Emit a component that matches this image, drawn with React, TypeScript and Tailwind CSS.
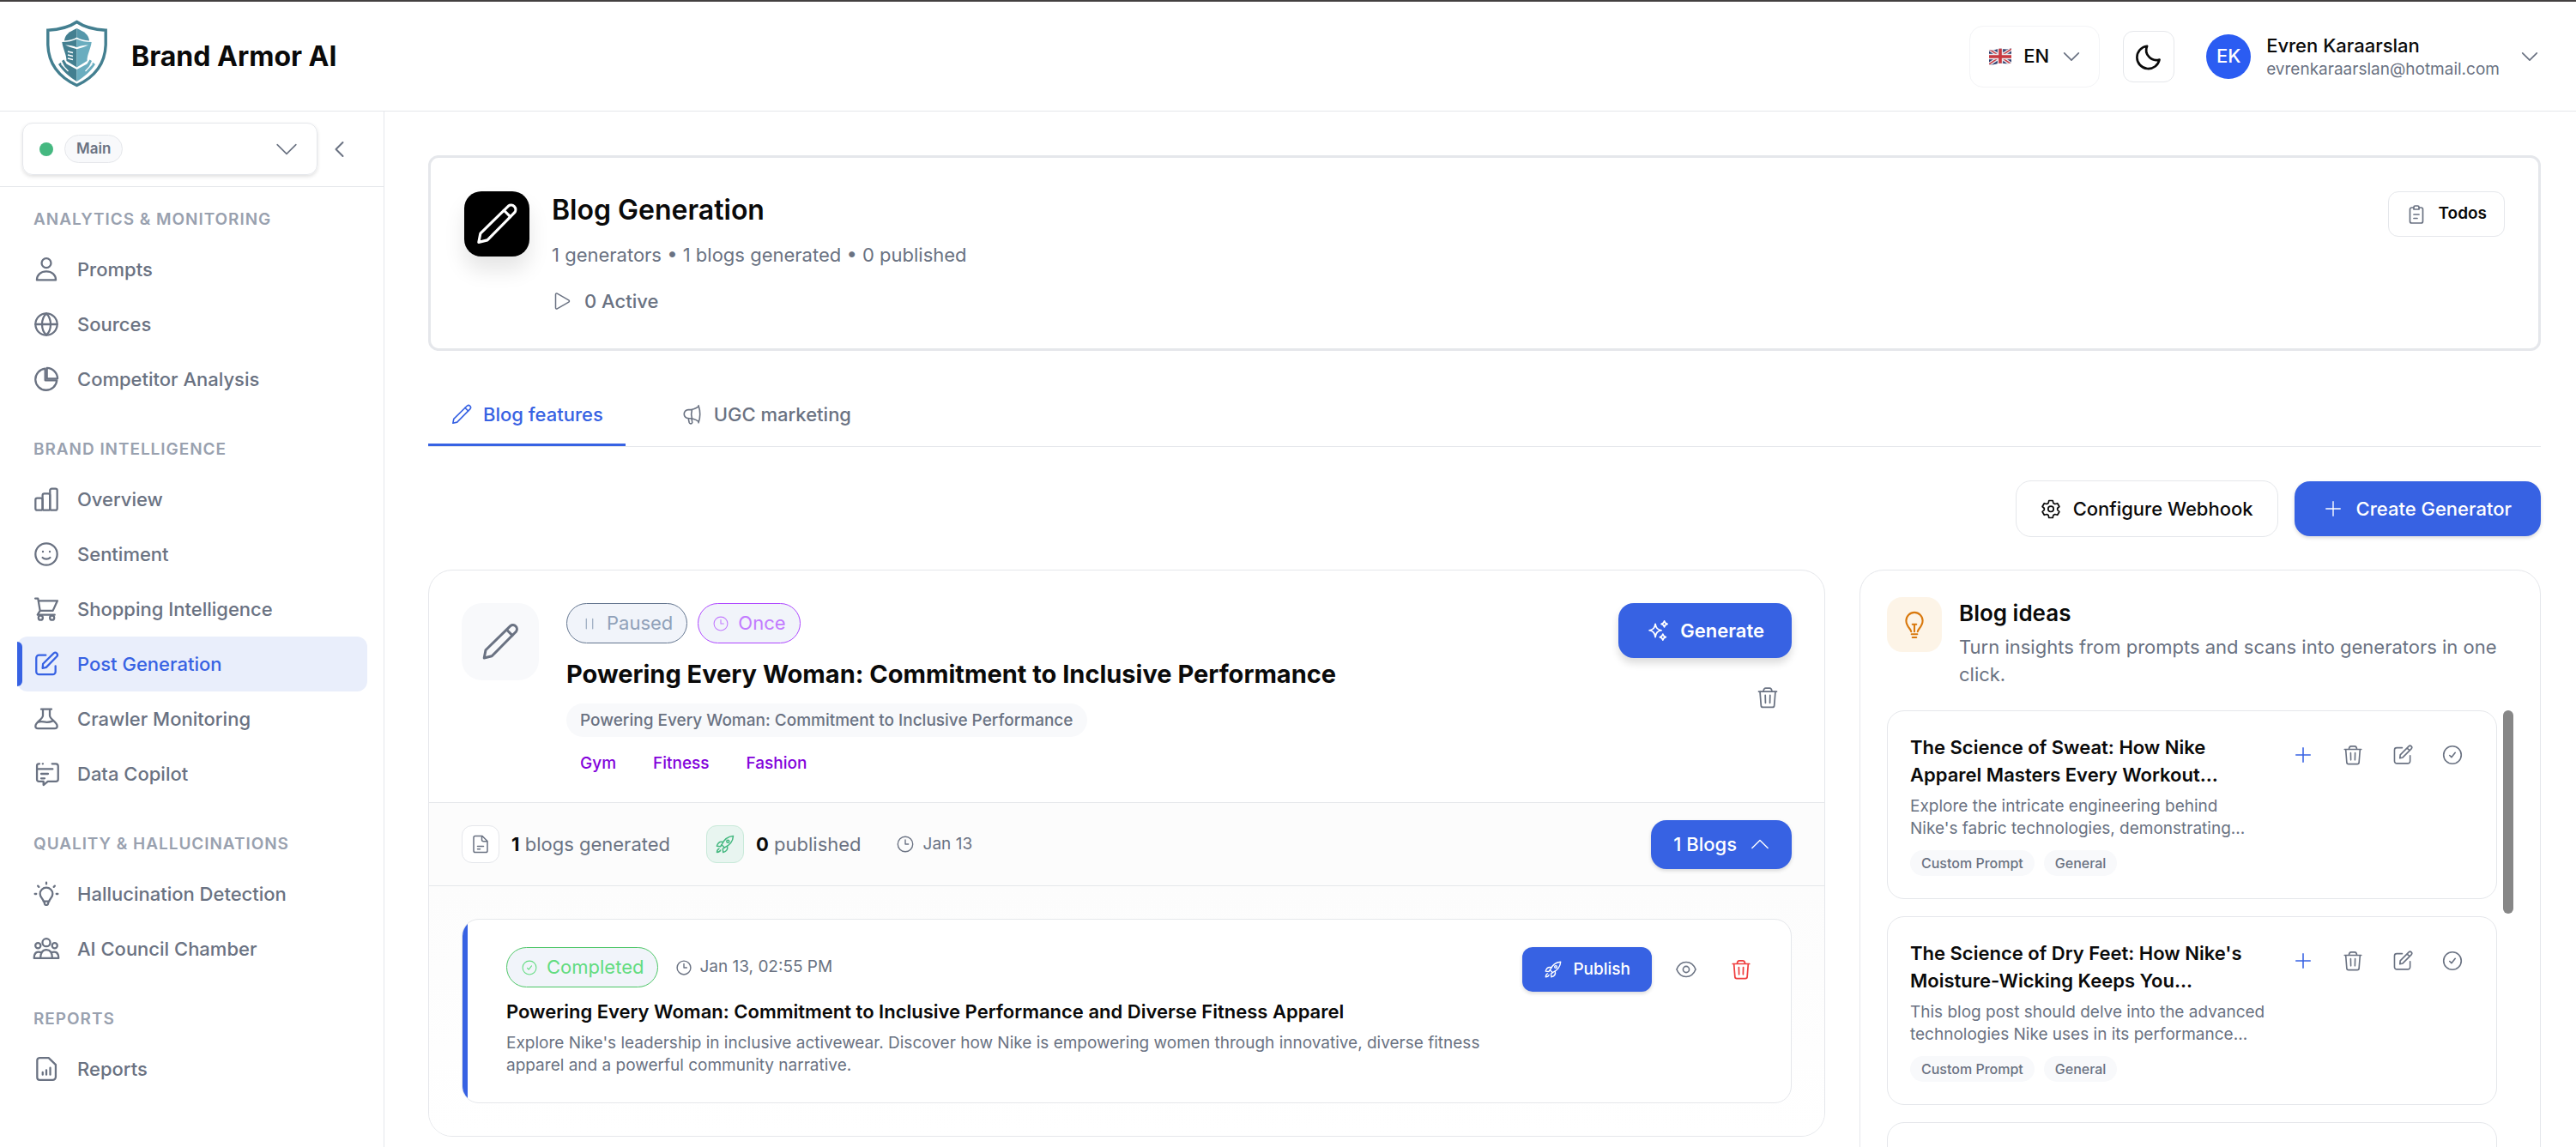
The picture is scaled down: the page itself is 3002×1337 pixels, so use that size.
import type { ReactNode } from 'react';

type IconProps = { className?: string; stroke?: number; children?: ReactNode };

function Icon({ className = 'size-7', stroke = 1.5, children }: IconProps) {
  return (
    <svg
      viewBox="0 0 24 24"
      fill="none"
      stroke="currentColor"
      strokeWidth={stroke}
      strokeLinecap="round"
      strokeLinejoin="round"
      aria-hidden="true"
      className={`shrink-0 ${className}`}
    >
      {children}
    </svg>
  );
}

const PencilIcon = (p: IconProps) => (
  <Icon {...p}>
    <path d="M2.6 21.5l.9-4.6L17.9 2.8a2.35 2.35 0 0 1 3.3 3.3L7.1 20.4z" />
    <path d="M15.7 5l3.3 3.3" />
  </Icon>
);

const TrashIcon = (p: IconProps) => (
  <Icon {...p}>
    <path d="M3 6h18M4.300 6l1.100 14a1.900 1.900 0 0 0 1.900 1.800h9.400a1.900 1.900 0 0 0 1.900-1.800L19.700 6M7.700 6c.2-2 .9-3.400 2.400-3.400h3.800c1.500 0 2.200 1.400 2.400 3.400M9.600 9.800l.2 7.600M14.400 9.800l-.2 7.600" />
  </Icon>
);

const RocketIcon = (p: IconProps) => (
  <Icon {...p}>
    <path d="M21.500 2.500C15.300 2.900 11.200 5.600 8 12.700l3.300 3.300c7-3.200 9.800-7.300 10.200-13.500z" />
    <circle cx="15.300" cy="8.700" r="1.500" />
    <path d="M9.700 9.500C6.200 8.600 3.400 10.600 2.400 14.300l4.200.4 1.400-2M14.500 14.300c.9 3.500-1.100 6.300-4.800 7.300l-.4-4.200 2-1.400" />
    <path d="M5 17.300c-1.400.5-2.300 2-2.500 4.200 2.200-.2 3.700-1.100 4.200-2.500" />
  </Icon>
);

const EditIcon = (p: IconProps) => (
  <Icon {...p}>
    <path d="M11.500 4.300H5.600a2.400 2.400 0 0 0-2.400 2.400v12a2.400 2.400 0 0 0 2.400 2.400h12a2.400 2.400 0 0 0 2.400-2.400v-6" />
    <path d="M9 15.500l.4-3.600 9.200-9.200a1.900 1.900 0 0 1 2.700 2.700l-9.200 9.300zM16.800 4.600l2.600 2.600" />
  </Icon>
);

const ClockIcon = (p: IconProps) => (
  <Icon {...p}>
    <circle cx="12" cy="12" r="9.500" />
    <path d="M12 6.500V12h4" />
  </Icon>
);

const CheckCircleIcon = (p: IconProps) => (
  <Icon {...p}>
    <circle cx="12" cy="12" r="9.500" />
    <path d="M9 12.500l2 2 4-5" />
  </Icon>
);

const ChevronDown = (p: IconProps) => (
  <Icon {...p}>
    <path d="M2 7l10 10L22 7" />
  </Icon>
);

const PlusIcon = (p: IconProps) => (
  <Icon {...p}>
    <path d="M12 3v18M3 12h18" />
  </Icon>
);

const BulbIcon = (p: IconProps) => (
  <Icon {...p}>
    <path d="M9.500 17.500c0-2-3.900-3.900-3.900-8.500a6.400 6.400 0 0 1 12.800 0c0 4.600-3.900 6.500-3.900 8.500M9.800 19.500h4.400M10.500 22h3M12 17.500v-5.500M10.500 11.800h3" />
  </Icon>
);

const navIcons: Record<string, ReactNode> = {
  Prompts: (
    <>
      <circle cx="12" cy="6.500" r="4.100" />
      <path d="M3.700 21.300c0-4.500 3.500-7.500 8.300-7.500s8.300 3 8.300 7.500z" />
    </>
  ),
  Sources: (
    <>
      <circle cx="12" cy="12" r="9.500" />
      <path d="M2.500 12h19M12 2.500c-5 4.800-5 14.200 0 19M12 2.500c5 4.800 5 14.200 0 19" />
    </>
  ),
  'Competitor Analysis': (
    <>
      <path d="M11 2.800a9.400 9.400 0 1 0 10.200 10.200H11z" />
      <path d="M12.500 2.200a9.600 9.600 0 0 1 9.300 9.300h-9.300z" />
    </>
  ),
  Overview: (
    <>
      <rect x="2.500" y="11" width="6.200" height="10.500" rx="1.500" />
      <rect x="8.700" y="7" width="6.500" height="14.500" rx="1.500" />
      <rect x="15.200" y="2.700" width="6.300" height="18.800" rx="1.500" />
    </>
  ),
  Sentiment: (
    <>
      <circle cx="12" cy="12" r="9.500" />
      <path d="M8.700 15c1.600 1.600 5 1.600 6.600 0M9 9.700v.2M15 9.700v.2" />
    </>
  ),
  'Shopping Intelligence': (
    <>
      <path d="M2.300 2.700h2.400l1.800 10.700h11.200L21.700 4.700H5M6.500 13.400L4.300 17h15" />
      <circle cx="7" cy="19.600" r="1.900" />
      <circle cx="17" cy="19.600" r="1.900" />
    </>
  ),
  'Post Generation': (
    <>
      <path d="M11.500 4.300H5.600a2.400 2.400 0 0 0-2.400 2.400v12a2.400 2.400 0 0 0 2.400 2.400h12a2.400 2.400 0 0 0 2.400-2.400v-5" />
      <path d="M8.700 15.600l.4-3.800 9.400-9.300a2 2 0 0 1 2.800 2.800l-9.400 9.600z" />
    </>
  ),
  'Crawler Monitoring': (
    <>
      <path d="M7.500 3.500h9M9 3.500v5.700c0 3-6.500 5.700-6.500 9.100 0 1.200.9 2 2.200 2h14.600c1.300 0 2.200-.8 2.200-2 0-3.400-6.500-6.100-6.500-9.100V3.500" />
      <path d="M4.700 14.800c4.500-1.500 6.500 1.500 12.500-.8" />
    </>
  ),
  'Data Copilot': (
    <>
      <path d="M6 3.200h-.6a1.600 1.600 0 0 0-1.600 1.600V17a1.600 1.600 0 0 0 1.600 1.600h4.100v3.200l3.800-3.200h7a2 2 0 0 0 2-2V5.200a2 2 0 0 0-2-2H17M9 3.200h-.2" />
      <path d="M5 7.800h12.500M7.500 12h6M7.500 16h3" />
    </>
  ),
  'Hallucination Detection': (
    <>
      <path d="M9.500 18.500c0-2-3-3-3-6.500a5.500 5.500 0 0 1 11 0c0 3.500-3 4.500-3 6.500zM10 18.700l.6 2.300a.9.900 0 0 0 .9.700h1a.9.900 0 0 0 .9-.7l.6-2.300" />
      <path d="M12 2v1.300M4.600 5l.9.900M19.400 5l-.9.900M2 12h1.200M20.800 12H22" />
    </>
  ),
  'AI Council Chamber': (
    <>
      <circle cx="12" cy="6.500" r="3.400" />
      <circle cx="4.700" cy="9.200" r="2.300" />
      <circle cx="19.300" cy="9.200" r="2.300" />
      <path d="M6.800 20.200c0-4.600 1.900-7.300 5.200-7.300s5.200 2.700 5.200 7.300M7.800 15.200c-4.300-1.600-6.500.4-6.500 5h21.400c0-4.600-2.200-6.600-6.500-5" />
    </>
  ),
  Reports: (
    <>
      <path d="M6 2.300h8l6.200 6V19a2.700 2.700 0 0 1-2.700 2.700H6.200A2.200 2.200 0 0 1 4 19.500V4.500a2.200 2.200 0 0 1 2-2.200z" />
      <path d="M8.800 15v2M12 13v4M15.400 11v6" />
    </>
  ),
};

const navGroups = [
  { title: 'Analytics & Monitoring', items: ['Prompts', 'Sources', 'Competitor Analysis'] },
  {
    title: 'Brand Intelligence',
    items: ['Overview', 'Sentiment', 'Shopping Intelligence', 'Post Generation', 'Crawler Monitoring', 'Data Copilot'],
  },
  { title: 'Quality & Hallucinations', items: ['Hallucination Detection', 'AI Council Chamber'] },
  { title: 'Reports', items: ['Reports'] },
];

const ideas = [
  {
    title: 'The Science of Sweat: How Nike Apparel Masters Every Workout...',
    text: "Explore the intricate engineering behind\nNike's fabric technologies, demonstrating...",
  },
  {
    title: "The Science of Dry Feet: How Nike's Moisture-Wicking Keeps You...",
    text: 'This blog post should delve into the advanced\ntechnologies Nike uses in its performance...',
  },
];

function Logo() {
  return (
    <svg viewBox="0 0 73 79" className="mb-[7px] h-[79px] w-[73px] shrink-0" aria-hidden="true">
      <path
        d="M36.500 2.500C28 8.500 16 11.500 2.800 12.200v17C3.500 50 15 66.500 36.500 76.500 58 66.500 69.500 50 70.200 29.200v-17C57 11.500 45 8.500 36.500 2.500z"
        fill="#fff"
        stroke="#437f90"
        strokeWidth="3.400"
      />
      <path d="M36.500 10C28 14 22.500 17 22 24.500c6-.3 10-1.500 14.500-4z" fill="#437f90" />
      <path d="M36.500 10c8.500 4 14 7 14.500 14.500-6-.3-10-1.500-14.500-4z" fill="#5597aa" />
      <path d="M19.300 26c7 0 12-1 17.200-3.500v33L24.500 48c0-8-4-13-5.200-22z" fill="#437f90" />
      <path d="M53.700 26c-7 0-12-1-17.200-3.500v33L48.500 48c0-8 4-13 5.200-22z" fill="#6aadbf" />
      <path d="M23 29.500c5 .2 9.500 1 13.500 2.700 4-1.700 8.500-2.500 13.500-2.700-4.500 2.200-9 3.500-13.500 4.700-4.500-1.200-9-2.500-13.500-4.700z" fill="#fff" />
      <path d="M26 37l6 1.600M26 41l6 1.600M26 45l6 1.600" stroke="#fff" strokeWidth="1.600" />
      <path d="M21.500 46.500l3 5 12 6.500v14C28.500 67 21 61 15 52l2.500-2 5 5-3.500-7z" fill="#437f90" />
      <path d="M51.500 46.500l-3 5-12 6.500v14C44.500 67 52 61 58 52l-2.500-2-5 5 3.500-7z" fill="#6aadbf" />
      <path d="M18.500 51.500l8 8.500M54.500 51.500l-8 8.500" stroke="#fff" strokeWidth="1.200" />
    </svg>
  );
}

function Flag() {
  return (
    <svg viewBox="0 0 26 20" className="h-5 w-[26px] shrink-0" aria-hidden="true">
      <clipPath id="flag">
        <path d="M0 2c5 2.500 9-2 14-1.200C19 1.500 22 2 26 0v17c-4 2-8 1-12 .8-5-.8-9 3.200-14 1.200z" />
      </clipPath>
      <g clipPath="url(#flag)">
        <path d="M0 0h26v20H0z" fill="#30406f" />
        <path d="M0 1l26 18M26 1L0 19" stroke="#e9e9ee" strokeWidth="4.200" />
        <path d="M0 1l26 18M26 1L0 19" stroke="#c8383f" strokeWidth="1.500" />
        <path d="M13 0v20M0 10h26" stroke="#e9e9ee" strokeWidth="6.400" />
        <path d="M13 0v20M0 10h26" stroke="#c8383f" strokeWidth="3.600" />
      </g>
    </svg>
  );
}

function Header() {
  return (
    <header className="flex h-[130px] shrink-0 items-center justify-between border-t-2 border-b border-t-[#434041] border-b-gray-200 pr-11 pl-[53px]">
      <a href="#home" className="flex items-center gap-[27px]">
        <Logo />
        <span className="text-[32px] leading-10 font-bold">Brand Armor AI</span>
      </a>
      <div className="flex items-center">
        <button className="flex h-[72px] items-center rounded-2xl border border-gray-100 px-[22px]">
          <Flag />
          <span className="ml-3.5 text-[22px] font-medium">EN</span>
          <ChevronDown className="ml-4 size-5 text-gray-500" stroke={2} />
        </button>
        <button aria-label="Dark mode" className="ml-[27px] flex size-[60px] items-center justify-center rounded-xl border border-gray-200">
          <Icon className="size-8" stroke={2}>
            <path d="M10.600 2.800A9.900 9.900 0 1 0 21.400 14.600 8.800 8.800 0 0 1 10.600 2.800z" />
          </Icon>
        </button>
        <button className="ml-[37px] flex items-center text-left">
          <span className="flex size-[52px] items-center justify-center rounded-full bg-[#2b5cf2] text-[22px] font-medium text-white">EK</span>
          <span className="ml-[18px] flex flex-col">
            <span className="text-[22px] leading-[30px] font-medium">Evren Karaarslan</span>
            <span className="text-[19px] leading-[26px] text-gray-500">evrenkaraarslan@hotmail.com</span>
          </span>
          <ChevronDown className="ml-[25px] size-5 text-gray-500" stroke={2} />
        </button>
      </div>
    </header>
  );
}

function Sidebar() {
  return (
    <aside className="flex w-[448px] shrink-0 flex-col border-r border-gray-200">
      <div className="flex h-[88px] shrink-0 items-center border-b border-gray-200 pl-[26px]">
        <button className="flex h-[61px] w-[344px] items-center rounded-xl border border-gray-200 pr-[22px] pl-[19px] shadow-[0_2px_4px_rgba(0,0,0,0.12)]">
          <span className="size-4 rounded-full bg-[#45b880]" />
          <span className="ml-[13px] rounded-full border border-gray-200 bg-[#f8f9fb] px-[13px] text-[17px] leading-[31px] font-semibold text-gray-500">Main</span>
          <ChevronDown className="ml-auto size-[26px] text-gray-500" stroke={1.5} />
        </button>
        <button aria-label="Collapse sidebar" className="ml-[13px] flex size-6 items-center justify-center text-gray-500">
          <Icon className="size-6" stroke={2}>
            <path d="M16.500 4L8.500 12l8 8" />
          </Icon>
        </button>
      </div>
      <nav className="flex flex-col gap-8 overflow-hidden pt-5 pr-[19px] pl-5">
        {navGroups.map((group) => (
          <section key={group.title}>
            <h2 className="mb-2 pl-[19px] text-[19px] leading-9 font-semibold tracking-wider text-gray-400 uppercase">{group.title}</h2>
            <ul>
              {group.items.map((item) => {
                const active = item === 'Post Generation';
                return (
                  <li
                    key={item}
                    className={`flex h-16 items-center rounded-xl ${active ? 'bg-[#e9eefb] text-[#3762e3]' : 'text-gray-500'}`}
                  >
                    <span className={`h-[52px] w-[6px] rounded-r-md ${active ? 'bg-[#3762e3]' : ''}`} />
                    <a href="#nav" className="flex flex-1 items-center gap-5 pl-3 text-[22px] font-medium">
                      <Icon className="size-8" stroke={1.7}>
                        {navIcons[item]}
                      </Icon>
                      {item}
                    </a>
                  </li>
                );
              })}
            </ul>
          </section>
        ))}
      </nav>
    </aside>
  );
}

function PageHeader() {
  return (
    <section className="flex items-start justify-between rounded-xl border-[3px] border-gray-200 p-[39px]">
      <div className="flex items-start gap-[26px]">
        <div className="flex size-[76px] items-center justify-center rounded-[20px] bg-black text-white shadow-[0_16px_24px_rgba(0,0,0,0.1)]">
          <PencilIcon className="size-[54px]" stroke={1.4} />
        </div>
        <div>
          <h1 className="text-[32px] leading-11 font-semibold">Blog Generation</h1>
          <p className="mt-3 text-[22px] leading-9 text-gray-500">1 generators • 1 blogs generated • 0 published</p>
          <p className="mt-5 flex items-center gap-3.5 text-[22px] leading-8 font-medium text-gray-500">
            <Icon className="size-6" stroke={1.5}>
              <path d="M4.500 4.300v15.400c0 1 .9 1.600 1.800 1.100l13.500-7.700c.9-.5.9-1.700 0-2.200L6.300 3.200c-.9-.5-1.800.1-1.800 1.100z" />
            </Icon>
            0 Active
          </p>
        </div>
      </div>
      <button className="flex h-[53px] items-center gap-3.5 rounded-xl border border-gray-200 px-5 text-[19px] font-semibold">
        <Icon className="size-6 text-gray-500" stroke={1.7}>
          <path d="M8 4H6.500a2 2 0 0 0-2 2v14a2 2 0 0 0 2 2h11a2 2 0 0 0 2-2V6a2 2 0 0 0-2-2H16M9 6V3.500A1.500 1.500 0 0 1 10.500 2h3A1.500 1.500 0 0 1 15 3.500V6zM9 12h6M9 16.500h4" />
        </Icon>
        Todos
      </button>
    </section>
  );
}

function Tabs() {
  return (
    <div className="mt-10 flex gap-[39px] border-b border-gray-200 text-[22px] font-medium">
      <button className="flex h-[71px] items-center gap-3 border-b-[3px] border-[#3762e3] px-[26px] text-[#3762e3]">
        <PencilIcon className="size-[26px]" />
        Blog features
      </button>
      <button className="flex h-[71px] items-center gap-3 border-b-[3px] border-transparent px-[26px] text-gray-500">
        <Icon className="size-[26px]" stroke={1.5}>
          <path d="M18.500 3.500C14.500 6.500 11 7 7.500 7a4.500 4.500 0 0 0-4.500 4.700 4.500 4.500 0 0 0 4.500 4.500c3.500 0 7 .5 11 3.500M18.500 2.500c2 6 2 12.500 0 18.500M11.500 7c-.9 3-.9 6.500 0 9.500M7.500 16.200l1 4.700c.2.700.8 1.100 1.500 1.100 1.200 0 2-.9 1.700-2l-.6-3" />
        </Icon>
        UGC marketing
      </button>
    </div>
  );
}

type BadgeProps = { className: string; icon: ReactNode; label: string };

function Badge({ className, icon, label }: BadgeProps) {
  return (
    <span className={`flex h-[47px] items-center gap-2.5 rounded-full border bg-[#f1f4fa] px-4 text-[22px] ${className}`}>
      {icon}
      {label}
    </span>
  );
}

function GeneratedBlog() {
  return (
    <article className="flex overflow-hidden rounded-[20px] border border-gray-200 bg-white">
      <div className="w-1.5 shrink-0 bg-[#3762e3]" />
      <div className="flex flex-1 items-start justify-between pt-8 pr-[34px] pb-[30px] pl-[45px]">
        <div className="max-w-[1154px]">
          <div className="flex items-center gap-5">
            <Badge
              className="border-[#4cc566] text-[#62dc80]"
              icon={<CheckCircleIcon className="size-5" stroke={1.3} />}
              label="Completed"
            />
            <span className="flex items-center gap-2 text-[19px] text-gray-500">
              <ClockIcon className="size-5" stroke={1.7} />
              Jan 13, 02:55 PM
            </span>
          </div>
          <h3 className="mt-3 text-[22px] leading-8 font-semibold">
            Powering Every Woman: Commitment to Inclusive Performance and Diverse Fitness Apparel
          </h3>
          <p className="mt-2 text-[19px] leading-[26px] text-gray-500">
            Explore Nike's leadership in inclusive activewear. Discover how Nike is empowering women through innovative, diverse fitness
            apparel and a powerful community narrative.
          </p>
        </div>
        <div className="flex items-center gap-4">
          <button className="flex h-[52px] items-center gap-3 rounded-xl bg-[#3762e3] px-[25px] text-[19px] font-medium text-white shadow-[0_2px_4px_rgba(0,0,0,0.15)]">
            <RocketIcon className="size-[22px]" />
            Publish
          </button>
          <button aria-label="Preview" className="flex size-12 items-center justify-center text-gray-500">
            <Icon className="size-[26px]" stroke={1.5}>
              <path d="M1.800 12C4 6.500 7.500 4.200 12 4.200S20 6.500 22.200 12C20 17.500 16.500 19.800 12 19.800S4 17.500 1.800 12z" />
              <circle cx="12" cy="12" r="3.300" />
            </Icon>
          </button>
          <button aria-label="Delete blog" className="flex size-12 items-center justify-center text-[#ef3f3f]">
            <TrashIcon className="size-[26px]" stroke={1.6} />
          </button>
        </div>
      </div>
    </article>
  );
}

function GeneratorCard() {
  return (
    <section className="col-span-2 self-start overflow-hidden rounded-[28px] border border-gray-200">
      <div className="flex items-start justify-between p-[38px] pb-[26px]">
        <div className="flex items-start gap-8">
          <div className="flex size-[90px] items-center justify-center rounded-3xl bg-[#f8f9fb] text-gray-500">
            <PencilIcon className="size-12" />
          </div>
          <div>
            <div className="flex gap-3">
              <Badge
                className="border-slate-500 text-slate-400"
                icon={
                  <Icon className="size-5" stroke={1.3}>
                    <path d="M7.500 5v14M16.500 5v14" />
                  </Icon>
                }
                label="Paused"
              />
              <Badge className="border-purple-500 text-purple-400" icon={<ClockIcon className="size-5" stroke={1.3} />} label="Once" />
            </div>
            <h2 className="mt-[18px] text-[29px] leading-9 font-bold">Powering Every Woman: Commitment to Inclusive Performance</h2>
            <span className="mt-4 inline-block rounded-full bg-[#f8f9fb] px-4 text-[19px] leading-[39px] font-medium text-gray-500">
              Powering Every Woman: Commitment to Inclusive Performance
            </span>
            <ul className="mt-3 flex gap-[11px] text-[19px] leading-[38px] font-medium text-purple-700">
              <li className="px-4">Gym</li>
              <li className="px-4">Fitness</li>
              <li className="px-4">Fashion</li>
            </ul>
          </div>
        </div>
        <div className="flex flex-col items-end gap-[18px]">
          <button className="flex h-16 items-center gap-3 rounded-[18px] bg-[#3762e3] px-8 text-[22px] font-semibold text-white shadow-[0_6px_10px_rgba(0,0,0,0.14)]">
            <Icon className="size-7" stroke={1.5}>
              <path d="M9.500 5.500c.7 4 2 5.500 6 6.300-4 .8-5.300 2.300-6 6.700-.7-4.400-2-5.900-6-6.700 4-.8 5.300-2.300 6-6.300zM18.500 2.500c.4 1.900 1.100 2.600 3 3-1.900.4-2.600 1.100-3 3-.4-1.900-1.100-2.600-3-3 1.900-.4 2.600-1.100 3-3zM17 15.500c.4 1.900 1.100 2.600 3 3-1.900.4-2.600 1.100-3 3-.4-1.900-1.100-2.600-3-3 1.900-.4 2.600-1.100 3-3z" />
            </Icon>
            Generate
          </button>
          <button aria-label="Delete generator" className="flex size-14 items-center justify-center text-gray-500">
            <TrashIcon />
          </button>
        </div>
      </div>
      <div className="flex h-[98px] items-center justify-between border-y border-gray-200 bg-[#fcfcfc] px-[38px]">
        <div className="flex items-center text-[22px] text-gray-500">
          <span className="flex size-11 items-center justify-center rounded-xl border border-gray-200 bg-white">
            <Icon className="size-6" stroke={1.5}>
              <path d="M14 2.500H5.800a1.800 1.800 0 0 0-1.800 1.800v15.400a1.800 1.800 0 0 0 1.800 1.800h12.400a1.800 1.800 0 0 0 1.800-1.800V8.500zM13.500 2.500v4.200A2 2 0 0 0 15.500 8.700H20M8.500 14.500h7M8.500 17.800h3" />
            </Icon>
          </span>
          <span className="ml-3.5">
            <b className="text-neutral-950">1</b> blogs generated
          </span>
          <span className="ml-[42px] flex size-11 items-center justify-center rounded-xl border border-[#c8e9d9] bg-[#e8f5f0] text-[#45b880]">
            <RocketIcon className="size-6" />
          </span>
          <span className="ml-3.5">
            <b className="text-neutral-950">0</b> published
          </span>
          <ClockIcon className="ml-10 size-[22px]" />
          <span className="ml-2.5 text-[19px]">Jan 13</span>
        </div>
        <button className="flex h-[57px] items-center gap-4 rounded-[18px] bg-[#3762e3] px-[26px] text-[22px] font-medium text-white shadow-[0_2px_4px_rgba(0,0,0,0.15)]">
          1 Blogs
          <ChevronDown className="size-[22px] rotate-180" />
        </button>
      </div>
      <div className="bg-linear-to-b from-[#fcfcfc] to-white p-[38px]">
        <GeneratedBlog />
      </div>
    </section>
  );
}

function IdeaCard({ title, text }: { title: string; text: string }) {
  return (
    <article className="flex items-start gap-3 rounded-[20px] border border-gray-200 p-[26px]">
      <div className="flex-1">
        <h3 className="text-[22px] leading-8 font-semibold">{title}</h3>
        <p className="mt-2 text-[19px] leading-[26px] whitespace-pre-line text-gray-500">{text}</p>
        <div className="mt-3 flex gap-[11px] text-base leading-[30px] font-medium text-gray-500">
          <span className="rounded-full bg-[#f8f9fb] px-[13px]">Custom Prompt</span>
          <span className="rounded-full bg-[#f8f9fb] px-[13px]">General</span>
        </div>
      </div>
      <div className="flex gap-2 text-gray-500">
        <button aria-label="Use idea" className="flex size-[50px] items-center justify-center text-[#3762e3]">
          <PlusIcon className="size-[22px]" stroke={1.7} />
        </button>
        <button aria-label="Delete idea" className="flex size-[50px] items-center justify-center">
          <TrashIcon className="size-[26px]" />
        </button>
        <button aria-label="Edit idea" className="flex size-[50px] items-center justify-center">
          <EditIcon className="size-[26px]" />
        </button>
        <button aria-label="Mark idea as done" className="flex size-[50px] items-center justify-center">
          <CheckCircleIcon className="size-[26px]" />
        </button>
      </div>
    </article>
  );
}

function IdeasPanel() {
  return (
    <section className="rounded-[28px] border border-gray-200 p-[31px]">
      <div className="flex items-start gap-5">
        <div className="flex size-16 shrink-0 items-center justify-center rounded-[18px] bg-[#fdf4e7] text-[#d9780c]">
          <BulbIcon className="size-9" stroke={1.4} />
        </div>
        <div>
          <h2 className="text-[26px] leading-[38px] font-semibold">Blog ideas</h2>
          <p className="mt-1 text-[22px] leading-8 text-gray-500">Turn insights from prompts and scans into generators in one click.</p>
        </div>
      </div>
      <div className="mt-[26px] flex items-start gap-[7px]">
        <div className="flex flex-1 flex-col gap-5">
          {ideas.map((idea) => (
            <IdeaCard key={idea.title} title={idea.title} text={idea.text} />
          ))}
          {/* next idea, still loading */}
          <article className="h-[220px] rounded-[20px] border border-gray-200" />
        </div>
        <div className="h-[237px] w-3 rounded-full bg-[#878787]" />
      </div>
    </section>
  );
}

export default function App() {
  return (
    <div className="flex h-screen flex-col overflow-hidden bg-white font-[Inter,sans-serif] text-neutral-950">
      <Header />
      <div className="flex min-h-0 flex-1">
        <Sidebar />
        <main className="min-w-0 flex-1 overflow-hidden pt-[51px] pr-[41px] pl-[51px]">
          <PageHeader />
          <Tabs />
          <div className="mt-[39px] flex items-center justify-end gap-[19px] text-[22px] font-medium">
            <button className="flex h-[66px] items-center gap-3.5 rounded-[18px] border border-gray-200 px-7">
              <Icon className="size-6" stroke={1.7}>
                <path d="M9.800 2.500h4.400l.7 2.900 1.900 1.100 2.900-.8 2.200 3.800-2.200 2v1.900l2.200 2.100-2.200 3.800-2.900-.8-1.900 1.100-.7 2.900H9.800l-.7-2.900-1.900-1.100-2.900.8-2.200-3.800 2.200-2.100v-1.900l-2.200-2 2.200-3.800 2.900.8 1.900-1.100z" />
                <circle cx="12" cy="12.300" r="3.200" />
              </Icon>
              Configure Webhook
            </button>
            <button className="flex h-16 items-center gap-4 rounded-[18px] bg-[#3762e3] px-[34px] text-white shadow-[0_2px_4px_rgba(0,0,0,0.15)]">
              <PlusIcon className="size-[22px]" />
              Create Generator
            </button>
          </div>
          <div className="mt-[38px] grid grid-cols-3 gap-10">
            <GeneratorCard />
            <IdeasPanel />
          </div>
        </main>
      </div>
    </div>
  );
}
